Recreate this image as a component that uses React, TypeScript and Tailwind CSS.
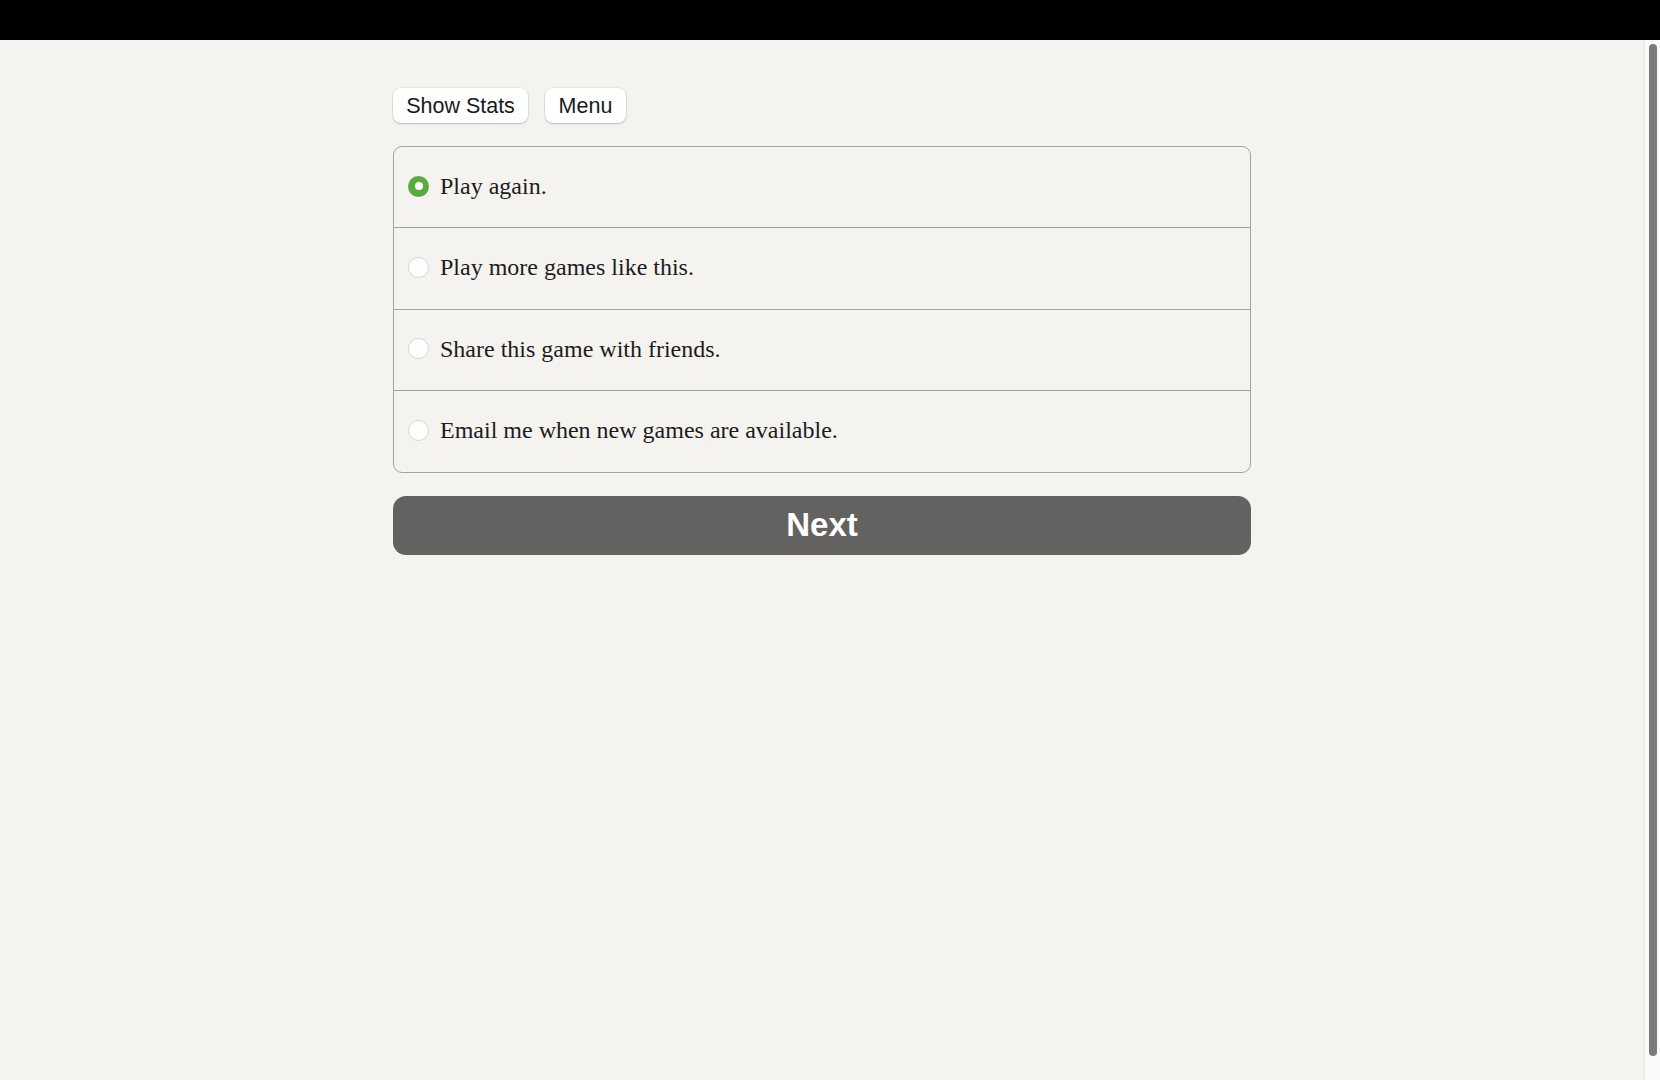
import React from "react";

const options = [
  "Play again.",
  "Play more games like this.",
  "Share this game with friends.",
  "Email me when new games are available.",
];

export default function App() {
  const selected = 0;
  return (
    <div className="flex h-[1080px] w-[1660px] flex-col overflow-hidden bg-black">
      <div className="h-[40px] shrink-0 bg-black" />
      <div className="flex flex-1 flex-row bg-[#f4f3ef]">
        <main className="flex-1">
          <div className="mx-auto mt-[48px] flex w-[858px] flex-col">
            <div className="flex flex-row gap-[17px] font-['Liberation_Sans',Arial,sans-serif] text-[21.5px] text-[#1a1a1a]">
              <button className="h-[35px] w-[135px] rounded-[8px] bg-white text-center leading-[36px] shadow-[0_1px_2px_rgba(0,0,0,0.18),0_0_0_1px_rgba(0,0,0,0.05)]">
                Show Stats
              </button>
              <button className="h-[35px] w-[81px] rounded-[8px] bg-white text-center leading-[36px] shadow-[0_1px_2px_rgba(0,0,0,0.18),0_0_0_1px_rgba(0,0,0,0.05)]">
                Menu
              </button>
            </div>
            <div className="mt-[23px] flex flex-col overflow-hidden rounded-[9px] border border-[#a2a2a4]">
              {options.map((o, i) => (
                <div
                  key={o}
                  className={
                    "flex flex-row items-center gap-[11px] pb-[2px] pl-[14px] " +
                    (i > 0 ? "h-[81.5px] border-t border-[#a2a2a4]" : "h-[80px]")
                  }
                >
                  {i === selected ? (
                    <span className="flex h-[21px] w-[21px] items-center justify-center rounded-full bg-[#5aab3f]">
                      <span className="h-[8px] w-[8px] rounded-full bg-white" />
                    </span>
                  ) : (
                    <span className="h-[21px] w-[21px] rounded-full border border-[#d4d4d4] bg-white" />
                  )}
                  <span className="font-['Liberation_Serif','Times_New_Roman',serif] text-[24px] leading-[28px] text-[#1c1c1c]">
                    {o}
                  </span>
                </div>
              ))}
            </div>
            <button className="mt-[23px] flex h-[59px] items-center justify-center rounded-[13px] bg-[#636260] font-['Liberation_Sans',Arial,sans-serif] text-[33px] font-bold text-white">
              Next
            </button>
          </div>
        </main>
        <div className="flex w-[16px] shrink-0 flex-col border-l border-[#e6e6e6] bg-[#fafafa] pb-[24px] pl-[4px] pr-[3px] pt-[4px]">
          <div className="flex-1 rounded-full bg-[#7b7b7b]" />
        </div>
      </div>
    </div>
  );
}
